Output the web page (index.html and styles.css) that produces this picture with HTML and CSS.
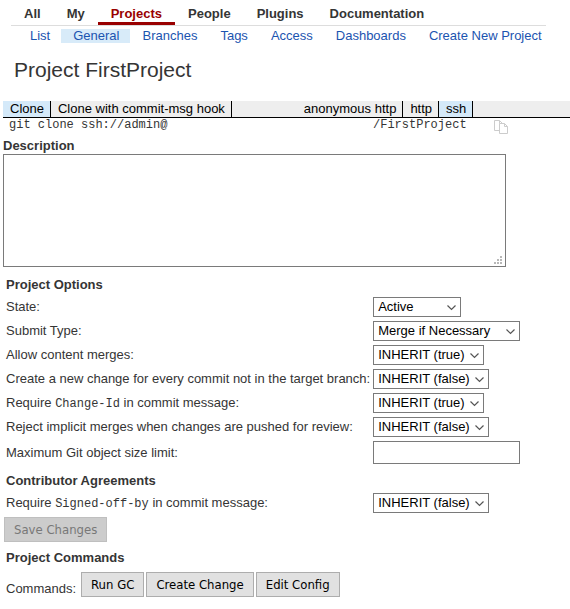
FILE: index.html
```
<!DOCTYPE html>
<html lang="en">
<head>
<meta charset="utf-8">
<title>Project FirstProject</title>
<link rel="stylesheet" href="styles.css">
</head>
<body>
<svg class="defs" aria-hidden="true">
  <symbol id="chevron" viewBox="0 0 9 6"><path d="M0.5 0.5L4.5 4.5L8.5 0.5" fill="none" stroke="#555" stroke-width="1.2"/></symbol>
</svg>
<header class="top">
  <nav class="tabs">
    <a href="#">All</a><a href="#">My</a><a href="#" class="current">Projects</a><a href="#">People</a><a href="#">Plugins</a><a href="#">Documentation</a>
  </nav>
  <nav class="subtabs">
    <a href="#">List</a><a href="#" class="current">General</a><a href="#">Branches</a><a href="#">Tags</a><a href="#">Access</a><a href="#">Dashboards</a><a href="#">Create New Project</a>
  </nav>
</header>
<main>
  <h1>Project FirstProject</h1>
  <section class="download">
    <div class="bar">
      <div class="commands"><button type="button" class="on">Clone</button><button type="button">Clone with commit-msg hook</button></div>
      <div class="schemes"><button type="button">anonymous http</button><button type="button">http</button><button type="button" class="on">ssh</button></div>
    </div>
    <div class="url">
      <code class="host">git clone ssh://admin@</code><code class="path">/FirstProject</code>
      <button type="button" class="copy" aria-label="Copy">
        <svg width="14" height="14" viewBox="0 0 14 14" fill="#fff" stroke="#ccc"><path d="M.5 .5H5.500L8.500 3.500V10.500H.5Z"/><path d="M5.500 .5V3.500H8.500" fill="none"/><path d="M5.500 3.500H10.500L13.500 6.500V13.500H5.500Z"/><path d="M10.500 3.500V6.500H13.500" fill="none"/></svg>
      </button>
    </div>
  </section>
  <section class="description">
    <label for="desc">Description</label>
    <div class="area">
      <textarea id="desc"></textarea>
      <svg class="grip" width="8" height="8" viewBox="0 0 8 8" fill="#b8b8b8" shape-rendering="crispEdges"><path d="M6 0h2v2h-2zM3 3h2v2h-2zM6 3h2v2h-2zM0 6h2v2h-2zM3 6h2v2h-2zM6 6h2v2h-2z"/></svg>
    </div>
  </section>
  <form class="options">
    <h2>Project Options</h2>
    <label for="state">State:</label>
    <span class="select short"><select id="state"><option>Active</option></select><svg><use href="#chevron"/></svg></span>
    <label for="submit">Submit Type:</label>
    <span class="select wide"><select id="submit"><option>Merge if Necessary</option></select><svg><use href="#chevron"/></svg></span>
    <label for="content">Allow content merges:</label>
    <span class="select"><select id="content"><option>INHERIT (true)</option></select><svg><use href="#chevron"/></svg></span>
    <label for="newchange">Create a new change for every commit not in the target branch:</label>
    <span class="select"><select id="newchange"><option>INHERIT (false)</option></select><svg><use href="#chevron"/></svg></span>
    <label for="changeid">Require <code>Change-Id</code> in commit message:</label>
    <span class="select"><select id="changeid"><option>INHERIT (true)</option></select><svg><use href="#chevron"/></svg></span>
    <label for="implicit">Reject implicit merges when changes are pushed for review:</label>
    <span class="select"><select id="implicit"><option>INHERIT (false)</option></select><svg><use href="#chevron"/></svg></span>
    <label for="limit">Maximum Git object size limit:</label>
    <input id="limit" type="text">
    <h2 class="later">Contributor Agreements</h2>
    <label for="signed">Require <code>Signed-off-by</code> in commit message:</label>
    <span class="select"><select id="signed"><option>INHERIT (false)</option></select><svg><use href="#chevron"/></svg></span>
  </form>
  <button type="button" class="button save" disabled>Save Changes</button>
  <section class="actions">
    <h2>Project Commands</h2>
    <div class="row"><span>Commands:</span><div class="buttons"><button type="button" class="button">Run GC</button><button type="button" class="button">Create Change</button><button type="button" class="button">Edit Config</button></div></div>
  </section>
</main>
</body>
</html>
```
FILE: styles.css
```
* { box-sizing: border-box; }
body {
  margin: 0;
  background: #fff;
  color: #353535;
  font: 13px/16px "Liberation Sans", Arial, sans-serif;
}
h1, h2 { margin: 0; }
h2 { font-size: 13px; line-height: 16px; }
a { text-decoration: none; }
button, select, input, textarea { font: inherit; margin: 0; border-radius: 0; }
code { font: 12px/14px "Liberation Mono", "Courier New", monospace; }
.defs { position: absolute; width: 0; height: 0; }

.top { padding: 0 24px 0 11px; white-space: nowrap; }
.tabs { display: flex; height: 26px; border-bottom: 1px solid #ddd; }
.tabs a { height: 25px; padding: 6px 13px 0; color: #353535; font-weight: bold; }
.tabs .current { color: #900; border-bottom: 3px solid #900; }
.subtabs { display: flex; padding: 3px 0 0 7px; }
.subtabs a { height: 14px; line-height: 14px; padding: 0 11px 0 12px; color: #1b54b0; }
.subtabs .current { background: #d8ebf9; }

h1 { padding: 15px 14px 0; font-size: 21px; line-height: 24px; font-weight: normal; }

.download { margin: 19px 0 0 3px; }
.bar { display: flex; gap: 65px; background: #eee; border-bottom: 1px solid #000; }
.commands, .schemes { display: flex; }
.bar button {
  height: 16px;
  padding: 0 6px 0 7px;
  border: 0;
  border-right: 1px solid #000;
  background: none;
  color: #000;
  line-height: 16px;
  white-space: nowrap;
}
.bar .on { background: #d4e9f9; }
.url { display: flex; align-items: flex-start; padding-left: 6px; height: 19px; }
.host { width: 364px; }
.path { width: 121px; }
.copy { padding: 0; border: 0; background: none; height: 14px; margin-top: 2px; }
.copy svg { display: block; }

.description { margin-left: 3px; }
.description label { display: block; font-weight: bold; line-height: 17px; }
.area { position: relative; width: 90%; max-width: 503px; }
textarea { display: block; width: 100%; height: 113px; border: 1px solid #7a7a7a; resize: none; }
.grip { position: absolute; right: 4px; bottom: 3px; }

.options {
  display: grid;
  grid-template-columns: max-content auto;
  justify-content: start;
  align-items: center;
  gap: 4px 3px;
  margin: 10px 0 0 6px;
}
.options h2 { grid-column: 1 / 3; }
.options .later { margin-top: 5px; }
.select { position: relative; justify-self: start; }
.select select {
  display: block;
  appearance: none;
  height: 20px;
  padding: 0 18px 0 4px;
  border: 1px solid #7a7a7a;
  background: #fff;
  color: #000;
}
.select svg { position: absolute; right: 5px; top: 8px; width: 9px; height: 6px; pointer-events: none; }
.short select { width: 88px; }
.wide select { width: 147px; }
.options input { width: 147px; height: 23px; border: 1px solid #7a7a7a; }

.button {
  height: 25px;
  padding: 0 9px;
  border: 1px solid #adadad;
  background: #e1e1e1;
  color: #000;
  font: 13px/23px "DejaVu Sans Condensed", Tahoma, sans-serif;
}
.save { display: block; margin: 4px 0 0 4px; }
.save:disabled { background: #ccc; border-color: #bfbfbf; color: #787878; }
.actions { margin: 8px 0 12px 6px; }
.row { display: flex; gap: 5px; margin-top: 6px; align-items: flex-end; }
.buttons { display: flex; gap: 2px; }
```
